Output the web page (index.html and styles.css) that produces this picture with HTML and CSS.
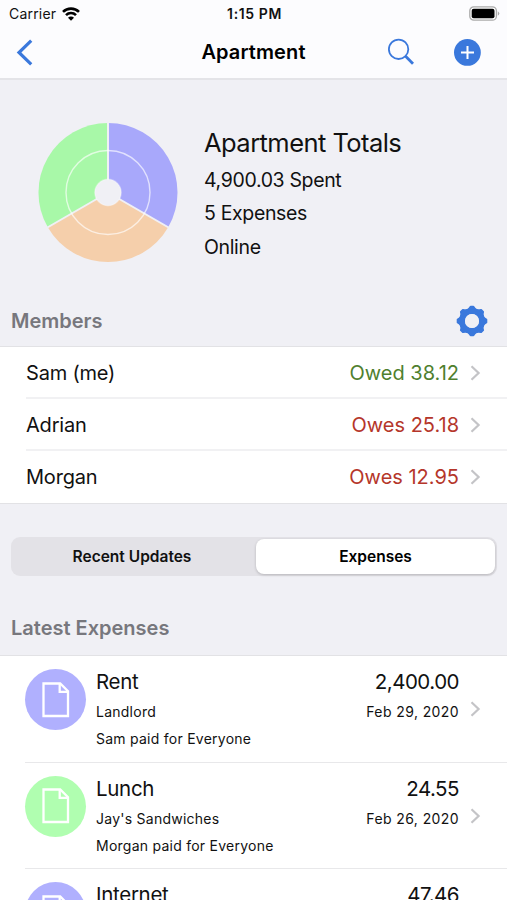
FILE: index.html
```html
<!DOCTYPE html>
<html lang="en">
<head>
  <meta charset="UTF-8">
  <title>Apartment</title>
  <meta name="viewport" content="width=device-width, initial-scale=1.0">
  <link rel="stylesheet" href="styles.css">
</head>
<body>

<header>
  <div class="status-bar">
    <div class="carrier">
      <span>Carrier</span>
      <svg width="18" height="14" viewBox="0 0 18 14" fill="none" stroke="#000" stroke-width="2.6">
        <path d="M1 4.9a11.3 11.3 0 0 1 16 0"/>
        <path d="M4 8.1a7.1 7.1 0 0 1 10 0"/>
        <path d="M9 13.7L6 10.7a4.2 4.2 0 0 1 6 0z" fill="#000" stroke="none"/>
      </svg>
    </div>
    <span class="time">1:15 PM</span>
    <svg class="battery" width="31" height="15" viewBox="0 0 31 15">
      <rect x="0.8" y="0.8" width="26.6" height="13.4" rx="4" fill="#fff" stroke="#aaa" stroke-width="1.3"/>
      <rect x="2.7" y="2.7" width="22.8" height="9.6" rx="2" fill="#000"/>
      <path d="M28.8 5.2q3 2.3 0 4.6z" fill="#aaa"/>
    </svg>
  </div>
  <nav>
    <svg class="back" width="17" height="27" viewBox="0 0 17 27" fill="none" stroke="#3a78dc" stroke-width="3.2">
      <path d="M15.2 1.6L3 13.5l12.2 11.9"/>
    </svg>
    <h1>Apartment</h1>
    <div class="nav-actions">
      <svg width="28" height="28" viewBox="0 0 28 28" fill="none" stroke="#3a78dc">
        <circle cx="11.6" cy="11.3" r="9.7" stroke-width="1.8"/>
        <path d="M18.6 18.3l7.4 7.4" stroke-width="2.8"/>
      </svg>
      <svg width="28" height="28" viewBox="0 0 28 28">
        <circle cx="14.4" cy="14.4" r="13.4" fill="#3a78dc"/>
        <path d="M14.5 8v13M8 14.5h13" stroke="#fff" stroke-width="2"/>
      </svg>
    </div>
  </nav>
</header>

<section class="totals">
  <svg class="chart" width="141" height="141" viewBox="-70 -70.5 141 141">
    <path d="M0 0V-69.5A69.5 69.5 0 0 1 60.2 34.75z" fill="#a8a8fb"/>
    <path d="M0 0L60.2 34.75A69.5 69.5 0 0 1 -60.2 34.75z" fill="#f5cfab"/>
    <path d="M0 0L-60.2 34.75A69.5 69.5 0 0 1 0 -69.5z" fill="#a8f8a8"/>
    <path d="M0 0V-70M0 0L60.6 35M0 0L-60.6 35" stroke="#f0f0f5" stroke-width="2"/>
    <circle r="42" fill="none" stroke="#fff" stroke-opacity="0.65" stroke-width="1.4"/>
    <circle r="13.2" fill="#f0f0f5" stroke="#fff" stroke-opacity="0.3" stroke-width="1.5"/>
  </svg>
  <div class="totals-text">
    <h2>Apartment Totals</h2>
    <p>4,900.03 Spent</p>
    <p>5 Expenses</p>
    <p>Online</p>
  </div>
</section>

<div class="section-title members-title">
  <h3>Members</h3>
  <svg width="32" height="32" viewBox="-16 -16 32 32">
    <g fill="none" stroke="#3a78dc">
      <circle r="9.9" stroke-width="5.8"/>
      <g fill="#3a78dc" stroke-width="1.8" stroke-linejoin="round">
        <path id="tooth" d="M-4.8 -10.9Q-2.6 -12 -1.4 -14.4H1.4Q2.6 -12 4.8 -10.9z"/>
        <use href="#tooth" transform="rotate(45)"/>
        <use href="#tooth" transform="rotate(90)"/>
        <use href="#tooth" transform="rotate(135)"/>
        <use href="#tooth" transform="rotate(180)"/>
        <use href="#tooth" transform="rotate(225)"/>
        <use href="#tooth" transform="rotate(270)"/>
        <use href="#tooth" transform="rotate(315)"/>
      </g>
    </g>
    <circle r="7" fill="#f0f0f5"/>
  </svg>
</div>

<ul class="members">
  <li>
    <span class="name">Sam (me)</span>
    <span class="owed">Owed 38.12</span>
    <svg class="arrow" width="11" height="16" viewBox="0 0 11 16"><path d="M1.5 1.2L8.6 8l-7.1 6.8"/></svg>
  </li>
  <li>
    <span class="name">Adrian</span>
    <span class="owes">Owes 25.18</span>
    <svg class="arrow" width="11" height="16" viewBox="0 0 11 16"><path d="M1.5 1.2L8.6 8l-7.1 6.8"/></svg>
  </li>
  <li>
    <span class="name">Morgan</span>
    <span class="owes">Owes 12.95</span>
    <svg class="arrow" width="11" height="16" viewBox="0 0 11 16"><path d="M1.5 1.2L8.6 8l-7.1 6.8"/></svg>
  </li>
</ul>

<div class="tabs">
  <button>Recent Updates</button>
  <button class="active">Expenses</button>
</div>

<div class="section-title expenses-title">
  <h3>Latest Expenses</h3>
</div>

<ul class="expenses">
  <li>
    <div class="badge purple">
      <svg width="28" height="36" viewBox="0 0 28 36"><path d="M1.5 1.5h16.7l7.8 7.8v24.7h-24.5z"/><path d="M17.7 2v7.8h7.8"/></svg>
    </div>
    <div class="row">
      <div class="details">
        <h4>Rent</h4>
        <p>Landlord</p>
        <p>Sam paid for Everyone</p>
      </div>
      <div class="amount">
        <h4>2,400.00</h4>
        <p>Feb 29, 2020</p>
      </div>
      <svg class="arrow" width="11" height="16" viewBox="0 0 11 16"><path d="M1.5 1.2L8.6 8l-7.1 6.8"/></svg>
    </div>
  </li>
  <li>
    <div class="badge green">
      <svg width="28" height="36" viewBox="0 0 28 36"><path d="M1.5 1.5h16.7l7.8 7.8v24.7h-24.5z"/><path d="M17.7 2v7.8h7.8"/></svg>
    </div>
    <div class="row">
      <div class="details">
        <h4>Lunch</h4>
        <p>Jay's Sandwiches</p>
        <p>Morgan paid for Everyone</p>
      </div>
      <div class="amount">
        <h4>24.55</h4>
        <p>Feb 26, 2020</p>
      </div>
      <svg class="arrow" width="11" height="16" viewBox="0 0 11 16"><path d="M1.5 1.2L8.6 8l-7.1 6.8"/></svg>
    </div>
  </li>
  <li>
    <div class="badge purple">
      <svg width="28" height="36" viewBox="0 0 28 36"><path d="M1.5 1.5h16.7l7.8 7.8v24.7h-24.5z"/><path d="M17.7 2v7.8h7.8"/></svg>
    </div>
    <div class="row">
      <div class="details">
        <h4>Internet</h4>
      </div>
      <div class="amount">
        <h4>47.46</h4>
      </div>
      <svg class="arrow" width="11" height="16" viewBox="0 0 11 16"><path d="M1.5 1.2L8.6 8l-7.1 6.8"/></svg>
    </div>
  </li>
</ul>

</body>
</html>
```

FILE: styles.css
```css
* {
  box-sizing: border-box;
  margin: 0;
  padding: 0;
}

html {
  overflow: hidden;
}

body {
  font-family: Inter, "Liberation Sans", sans-serif;
  background: #f0f0f5;
  color: #111;
  height: 900px;
  overflow: hidden;
}

svg {
  display: block;
  flex-shrink: 0;
}

h1, h2, h3, h4 {
  font-weight: 400;
}

ul {
  list-style: none;
}

header {
  height: 80px;
  background: #fcfcfe;
  border-bottom: 2px solid #e4e4e8;
}

.status-bar {
  display: grid;
  grid-template-columns: 1fr auto 1fr;
  align-items: center;
  height: 27px;
  padding: 0 7px 0 9px;
  font-size: 14px;
}

.carrier {
  display: flex;
  align-items: center;
  gap: 6px;
  letter-spacing: 0.2px;
}

.time {
  font-weight: 600;
  font-size: 14px;
  letter-spacing: 0.6px;
}

.battery {
  justify-self: end;
}

nav {
  display: grid;
  grid-template-columns: 1fr auto 1fr;
  align-items: center;
  height: 50px;
  padding: 0 26px 0 16px;
}

h1 {
  padding-left: 10px;
  font-size: 20px;
  font-weight: 600;
  letter-spacing: 0.1px;
  color: #000;
}

.nav-actions {
  display: flex;
  justify-content: flex-end;
  gap: 38px;
}

.totals {
  display: flex;
  gap: 25px;
  height: 218px;
  padding: 42px 38px 0;
}

h2 {
  font-size: 25.5px;
  line-height: 42px;
  letter-spacing: -0.55px;
}

.totals-text p {
  font-size: 19.5px;
  line-height: 33.4px;
  letter-spacing: -0.35px;
}

.section-title {
  display: flex;
  justify-content: space-between;
  padding: 0 19px 0 11px;
}

h3 {
  font-size: 20px;
  font-weight: 600;
  line-height: 32px;
  color: #77777d;
}

.members-title {
  padding-top: 7px;
  height: 48px;
}

.members {
  background: #fff;
  border-top: 1px solid #e2e2e5;
  border-bottom: 1px solid #e2e2e5;
}

.members li {
  display: flex;
  align-items: center;
  height: 52px;
  margin-left: 26px;
  padding: 2px 26px 0 0;
  font-size: 20px;
  border-bottom: 2px solid #f1f1f3;
}

.members li:last-child {
  padding-top: 0;
  border-bottom: none;
}

.name {
  flex: 1;
  letter-spacing: -0.2px;
}

.owed {
  color: #4f7f2f;
}

.owes {
  color: #b5362a;
}

.arrow {
  margin-left: 11px;
  fill: none;
  stroke: #c4c4c7;
  stroke-width: 2.2;
}

.tabs {
  display: flex;
  height: 39px;
  margin: 33px 10px 0 11px;
  padding: 2px;
  background: #e3e2e7;
  border-radius: 9px;
}

.tabs button {
  flex: 1;
  padding-right: 5px;
  font-family: inherit;
  font-size: 15.5px;
  font-weight: 600;
  color: #111;
  background: none;
  border: none;
  border-radius: 8px;
}

.tabs .active {
  flex: 0 0 239px;
  padding: 0;
  background: #fff;
  color: #000;
  box-shadow: 0 1px 3px rgba(0, 0, 0, 0.2);
}

.expenses-title {
  padding-top: 36px;
  height: 79px;
}

.expenses {
  background: #fff;
  border-top: 1px solid #e2e2e5;
}

.expenses li {
  display: flex;
  height: 106.7px;
  margin-left: 25px;
  border-bottom: 1px solid #e8e8ea;
}

.badge {
  display: flex;
  align-items: center;
  justify-content: center;
  flex-shrink: 0;
  width: 61px;
  height: 61px;
  margin: 13px 0 0;
  border-radius: 50%;
}

.badge svg {
  fill: none;
  stroke: #fff;
  stroke-width: 2.3;
}

.purple {
  background: #b0b0fe;
}

.green {
  background: #b0feb0;
}

.row {
  display: flex;
  flex: 1;
  align-items: center;
  padding: 0 26px 0 10px;
}

.details, .amount {
  align-self: flex-start;
  padding-top: 10px;
}

.details {
  flex: 1;
}

.amount {
  text-align: right;
}

h4 {
  font-size: 20.5px;
  line-height: 32px;
  letter-spacing: -0.3px;
}

.amount h4 {
  letter-spacing: -0.5px;
}

.expenses p {
  font-size: 14px;
  line-height: 27.4px;
  letter-spacing: 0.25px;
}

.expenses .amount p {
  letter-spacing: 0.4px;
}
```
